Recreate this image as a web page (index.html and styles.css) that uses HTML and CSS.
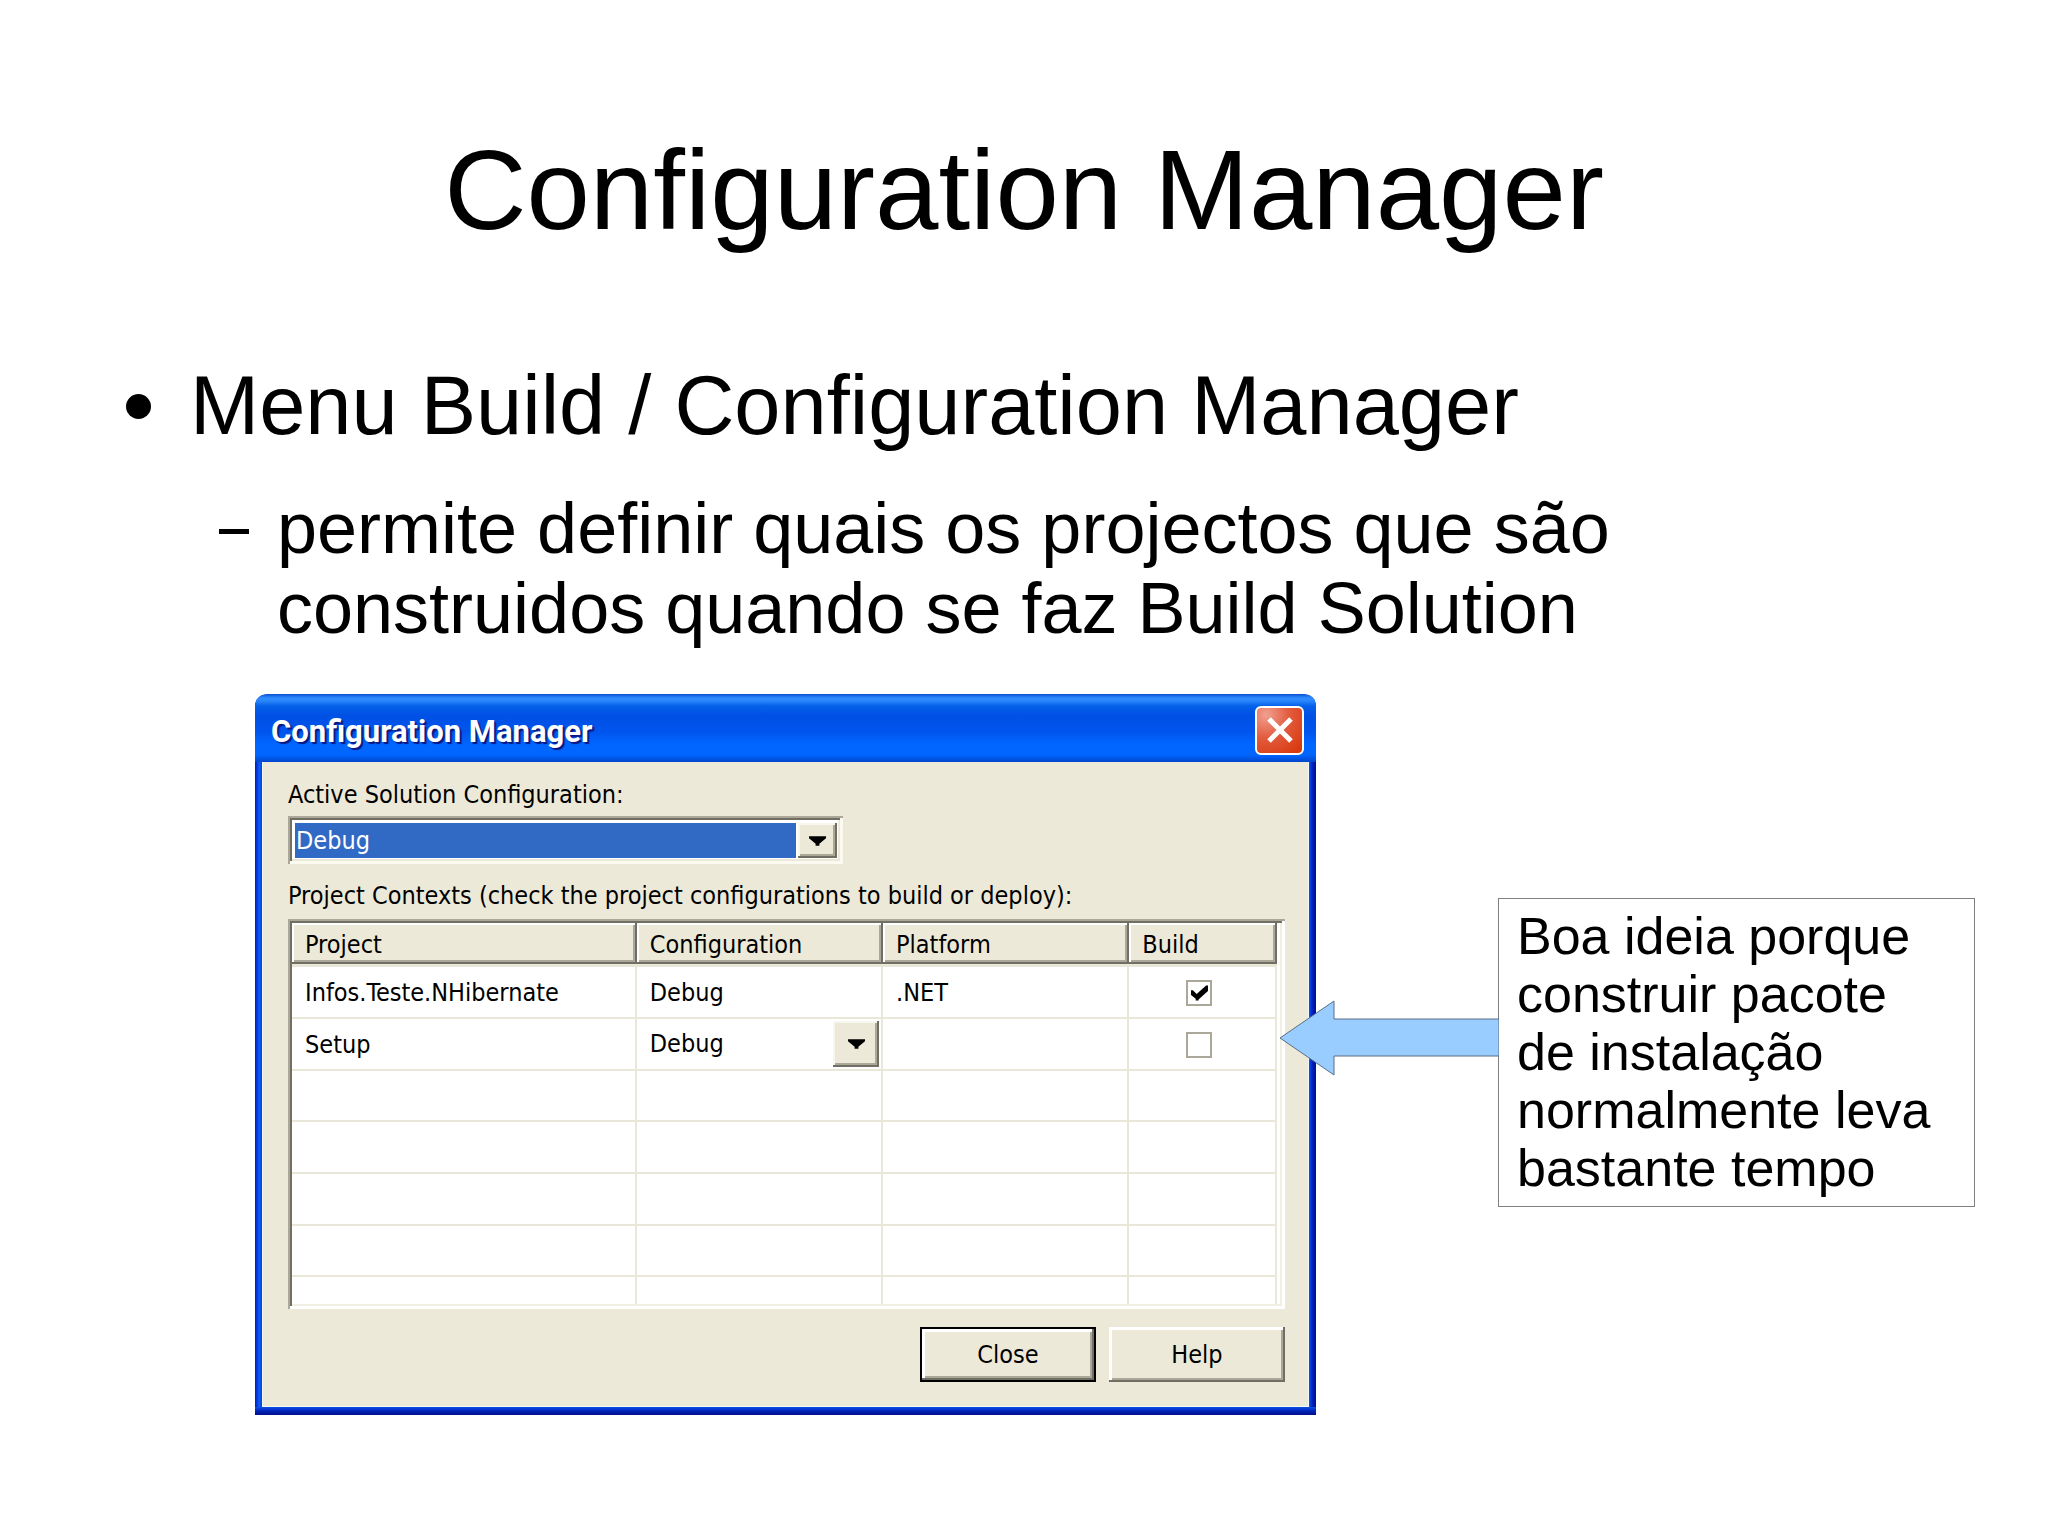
FILE: index.html
```
<!DOCTYPE html>
<html lang="pt">
<head>
    <meta charset="UTF-8">
    <meta name="viewport" content="width=device-width, initial-scale=1.0">
    <title>Configuration Manager</title>
    <link rel="stylesheet" href="styles.css">
</head>
<body>
    <main class="slide">
        <h1>Configuration Manager</h1>

        <ul class="topics">
            <li>
                <p>Menu Build / Configuration Manager</p>
                <ul class="subtopics">
                    <li>permite definir quais os projectos que são construidos quando se faz Build Solution</li>
                </ul>
            </li>
        </ul>

        <div class="figure">
            <section class="dialog" aria-labelledby="dialogTitle">
                <header class="title-bar">
                    <h2 id="dialogTitle">Configuration Manager</h2>
                    <button type="button" class="close-box" aria-label="Close window">
                        <svg viewBox="0 0 26 26" width="26" height="26"><path d="M2 2 L24 24 M24 2 L2 24" stroke="#fff" stroke-width="5" fill="none"/></svg>
                    </button>
                </header>

                <form class="dialog-body">
                    <label for="solutionConfig">Active Solution Configuration:</label>
                    <div class="combo">
                        <select id="solutionConfig">
                            <option>Debug</option>
                            <option>Release</option>
                        </select>
                        <span class="arrow"><svg viewBox="0 0 18 10" width="17" height="10"><path d="M0 0H18V2L11 8V10H7V8L0 2Z"/></svg></span>
                    </div>

                    <p class="grid-label" id="gridLabel">Project Contexts (check the project configurations to build or deploy):</p>
                    <div class="grid">
                        <table aria-labelledby="gridLabel">
                            <colgroup>
                                <col class="col-project">
                                <col class="col-config">
                                <col class="col-platform">
                                <col class="col-build">
                            </colgroup>
                            <thead>
                                <tr>
                                    <th>Project</th>
                                    <th>Configuration</th>
                                    <th>Platform</th>
                                    <th>Build</th>
                                </tr>
                            </thead>
                            <tbody>
                                <tr>
                                    <td>Infos.Teste.NHibernate</td>
                                    <td>Debug</td>
                                    <td>.NET</td>
                                    <td class="check"><input type="checkbox" aria-label="Build Infos.Teste.NHibernate" checked></td>
                                </tr>
                                <tr>
                                    <td>Setup</td>
                                    <td class="combo-cell">
                                        <div class="cell-combo">
                                            <select aria-label="Setup configuration">
                                                <option>Debug</option>
                                                <option>Release</option>
                                            </select>
                                            <span class="arrow"><svg viewBox="0 0 18 10" width="17" height="10"><path d="M0 0H18V2L11 8V10H7V8L0 2Z"/></svg></span>
                                        </div>
                                    </td>
                                    <td></td>
                                    <td class="check"><input type="checkbox" aria-label="Build Setup"></td>
                                </tr>
                                <tr><td></td><td></td><td></td><td></td></tr>
                                <tr><td></td><td></td><td></td><td></td></tr>
                                <tr><td></td><td></td><td></td><td></td></tr>
                                <tr><td></td><td></td><td></td><td></td></tr>
                                <tr class="cut-row"><td></td><td></td><td></td><td></td></tr>
                            </tbody>
                        </table>
                    </div>

                    <div class="actions">
                        <button type="button" class="btn btn-default">Close</button>
                        <button type="button" class="btn">Help</button>
                    </div>
                </form>
            </section>

            <aside class="note">
                <svg class="note-arrow" viewBox="0 0 220 76" width="220" height="76">
                    <path d="M1 38 L55 1 V19 H220 V56 H55 V75 Z" fill="#99ccff" stroke="#5a6f85"/>
                </svg>
                <p>Boa ideia porque construir pacote de instalação normalmente leva bastante tempo</p>
            </aside>
        </div>
    </main>
</body>
</html>
```
FILE: styles.css
```
:root {
    --face: #ece9d8;
    --shadow: #aca899;
    --dark-shadow: #716f64;
    --highlight: #316ac5;
    --grid-line: #e9e7d8;
}

* {
    margin: 0;
    padding: 0;
    box-sizing: border-box;
}

body {
    font-family: "Liberation Sans", Arial, sans-serif;
    color: #000;
    background-color: #fff;
}

.slide {
    padding: 126px 0 100px;
}

h1 {
    font-size: 114px;
    line-height: 128px;
    font-weight: 400;
    text-align: center;
}

/* Bullets */
ul {
    list-style: none;
}

.topics {
    margin-top: 104px;
    padding: 0 100px 0 126px;
}

.topics > li > p {
    display: flex;
    align-items: center;
    gap: 39px;
    font-size: 83px;
    line-height: 96px;
}

.topics > li > p::before {
    content: "";
    width: 25px;
    height: 25px;
    border-radius: 50%;
    background-color: #000;
}

.subtopics {
    margin-top: 34px;
    padding-left: 93px;
}

.subtopics li {
    display: flex;
    gap: 28px;
    font-size: 72px;
    line-height: 80px;
}

.subtopics li::before {
    content: "";
    flex: none;
    width: 30px;
    height: 5px;
    margin-top: 41px;
    background-color: #000;
}

.figure {
    display: grid;
    grid-template-columns: 1061fr 477fr;
    gap: 182px;
    align-items: start;
    margin-top: 46px;
    padding: 0 73px 0 255px;
}

/* Dialog window */
.dialog {
    padding: 0 7px 8px;
    border-radius: 12px 12px 0 0;
    background:
        linear-gradient(#0f50e8, #0022b8 50%, #00108a) bottom / 100% 8px no-repeat,
        linear-gradient(90deg, #0019c0, #0f5cf5 60%, #0046e0) left / 7px 100% no-repeat,
        linear-gradient(90deg, #1250f0, #0020c0 50%, #00108a) right / 7px 100% no-repeat;
    font-family: "DejaVu Sans Condensed", Tahoma, sans-serif;
    font-size: 25px;
    line-height: 30px;
}

.title-bar {
    display: flex;
    justify-content: space-between;
    align-items: center;
    height: 68px;
    margin: 0 -7px;
    padding: 4px 12px 0 16px;
    border-radius: 12px 12px 0 0;
    background: linear-gradient(#0a4fd0 0, #2f8cff 4px, #2a86fb 7px, #0560ea 12px, #0050e4 22px, #0055ee 38px, #0066ff 50px, #0066ff 61px, #0044cc 68px);
}

.title-bar h2 {
    padding-top: 4px;
    color: #fff;
    font-family: Roboto, "Trebuchet MS", sans-serif;
    font-size: 31px;
    line-height: 36px;
    font-weight: 700;
    text-shadow: 2px 2px 1px #0a1883;
}

.close-box {
    display: flex;
    justify-content: center;
    align-items: center;
    width: 49px;
    height: 49px;
    border: 2px solid #fff;
    border-radius: 6px;
    background: radial-gradient(circle at 20% 15%, #f0a090, #e25a3c 45%, #d83a10 90%);
}

.dialog-body {
    padding: 18px 23px 24px 25px;
    border: 1px solid #f6f8f4;
    border-top: 0;
    background-color: var(--face);
}

.dialog-body label {
    display: block;
}

select {
    appearance: none;
    flex: 1;
    min-width: 0;
    border: 0;
    font: inherit;
    outline: none;
}

.combo {
    display: flex;
    gap: 2px;
    width: 555px;
    max-width: 100%;
    height: 48px;
    margin-top: 6px;
    padding: 7px 6px 6px 7px;
    background-color: #fff;
    box-shadow: inset 2px 2px var(--shadow), inset -3px -3px #fbfaf0, inset 4px 4px var(--dark-shadow), inset -5px -5px var(--face);
}

.combo select {
    padding-left: 1px;
    background-color: var(--highlight);
    color: #fff;
}

.arrow {
    display: flex;
    justify-content: center;
    align-items: center;
    width: 39px;
    background-color: var(--face);
    box-shadow: inset -2px -2px var(--dark-shadow), inset 2px 2px #f8f7ee, inset -4px -4px var(--shadow);
    pointer-events: none;
}

/* Project contexts */
.grid-label {
    margin: 17px 0 8px;
}

.grid {
    padding: 4px 8px 5px 4px;
    background-color: #fff;
    box-shadow: inset 2px 2px var(--shadow), inset -3px -3px #fff, inset 4px 4px var(--dark-shadow), inset -5px -5px #f1efe2;
}

table {
    width: 100%;
    table-layout: fixed;
    border-collapse: separate;
    border-spacing: 0;
}

.col-project {
    width: 35%;
}

.col-config,
.col-platform {
    width: 25%;
}

.col-build {
    width: 15%;
}

th {
    height: 44px;
    padding: 2px 13px 0;
    border-bottom: 3px solid var(--grid-line);
    background-color: var(--face);
    background-clip: padding-box;
    box-shadow: inset -2px -2px var(--dark-shadow), inset 2px 2px #fff, inset -4px -4px var(--shadow);
    font-weight: 400;
    text-align: left;
}

td {
    height: 52px;
    padding: 2px 13px 0;
    border-right: 2px solid var(--grid-line);
    border-bottom: 2px solid var(--grid-line);
}

tbody tr:nth-child(3n) td {
    height: 51px;
}

tbody .cut-row td {
    height: 27px;
    border-bottom: 0;
}

.combo-cell {
    padding: 0 2px 0 13px;
}

.cell-combo {
    display: flex;
    height: 46px;
}

.cell-combo select {
    background-color: #fff;
}

.cell-combo .arrow {
    width: 46px;
}

.check {
    padding: 0 6px 0 0;
    text-align: center;
}

.check input {
    appearance: none;
    display: inline-block;
    width: 26px;
    height: 26px;
    border: 2px solid var(--shadow);
    background-color: #fff;
    vertical-align: middle;
}

.check input:checked {
    background: url("data:image/svg+xml,%3Csvg xmlns='http://www.w3.org/2000/svg' viewBox='0 0 18 16'%3E%3Cpath d='M0 5H2L6 9L16 0H18V6L8 15V16H5V14L0 10Z'/%3E%3C/svg%3E") center / 17px 16px no-repeat #fff;
}

.actions {
    display: flex;
    justify-content: flex-end;
    gap: 13px;
    margin-top: 18px;
}

.btn {
    width: 176px;
    height: 55px;
    border: 0;
    background-color: var(--face);
    box-shadow: inset -2px -2px var(--dark-shadow), inset 3px 3px #fff, inset -4px -4px var(--shadow);
    font: inherit;
}

.btn-default {
    border: 2px solid #000;
}

/* Side note */
.note {
    position: relative;
    margin-top: 204px;
    padding: 8px 30px 9px 18px;
    border: 1px solid #808080;
    background-color: #fff;
    font-size: 52px;
    line-height: 58px;
}

.note-arrow {
    position: absolute;
    top: 101px;
    right: 100%;
}
```
